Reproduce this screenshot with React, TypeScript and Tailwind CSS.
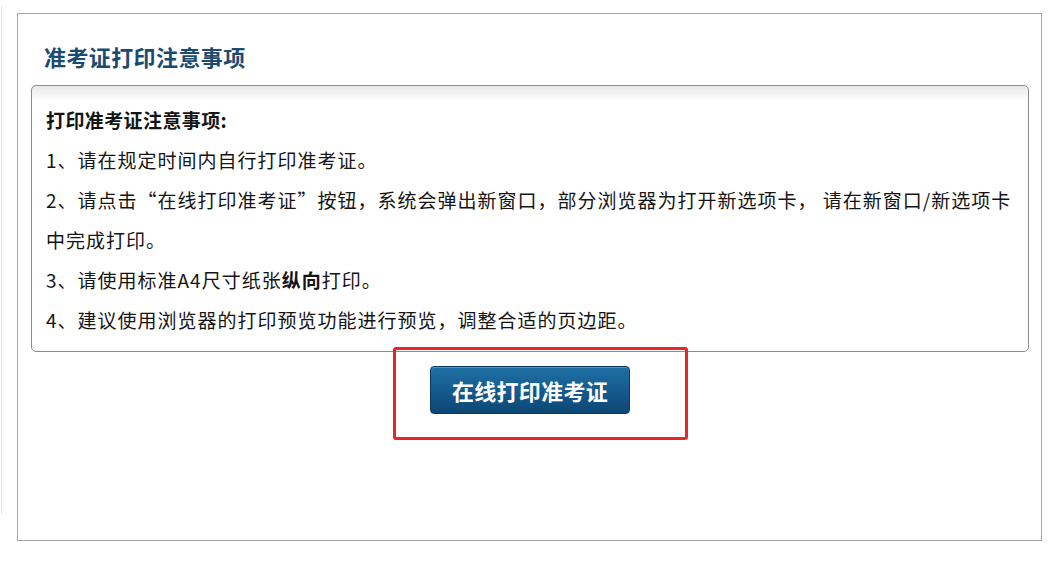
import React from 'react'

const notes: React.ReactNode[] = [
  '1、请在规定时间内自行打印准考证。',
  '2、请点击“在线打印准考证”按钮，系统会弹出新窗口，部分浏览器为打开新选项卡， 请在新窗口/新选项卡中完成打印。',
  <>
    3、请使用标准A4尺寸纸张<b className="font-bold">纵向</b>打印。
  </>,
  '4、建议使用浏览器的打印预览功能进行预览，调整合适的页边距。',
]

export default function App() {
  return (
    <div
      className="flex w-[1050px] h-[561px] bg-white"
      style={{ fontFamily: '"Noto Sans CJK SC", "Noto Sans", sans-serif' }}
    >
      {/* faint edge of the neighbouring column */}
      <div className="w-[2px] mt-[6px] h-[508px] border-r border-[#e2e2e2]" />

      <div className="ml-[15px] mt-[13px] w-[1025px] h-[528px] border border-[#a6a6a6] flex flex-col">
        <h2 className="ml-[26px] mt-[26px] h-[32px] leading-[32px] text-[22px] font-bold text-[#1b4b72] tracking-[0.4px]">
          准考证打印注意事项
        </h2>

        <div className="relative mt-[13px] ml-[13px] w-[998px] flex flex-col items-center">
          <div className="w-full h-[267px] rounded-[5px] border border-[#8c8c8c] bg-gradient-to-b from-[#e6e6e6] via-white via-[14px] to-white pt-[14px] pb-[10px] pl-[14px] pr-[10px] text-[19px] leading-[40px] tracking-[1px] text-[#141414]">
            <p className="font-bold tracking-[0.4px]">打印准考证注意事项:</p>
            {notes.map((n, i) => (
              <p key={i}>{n}</p>
            ))}
          </div>

          <button className="mt-[14px] w-[200px] h-[48px] rounded-[4px] border border-[#0b3a5e] bg-gradient-to-b from-[#1f70a6] to-[#0c4775] text-white text-[22px] font-bold tracking-[0.3px] shadow-[inset_0_1px_0_rgba(255,255,255,0.25)]">
            在线打印准考证
          </button>

          {/* red annotation box */}
          <div className="absolute left-[362px] top-[262px] w-[295px] h-[93px] rounded-[3px] border-[3px] border-[#e8262a]" />
        </div>
      </div>
    </div>
  )
}
